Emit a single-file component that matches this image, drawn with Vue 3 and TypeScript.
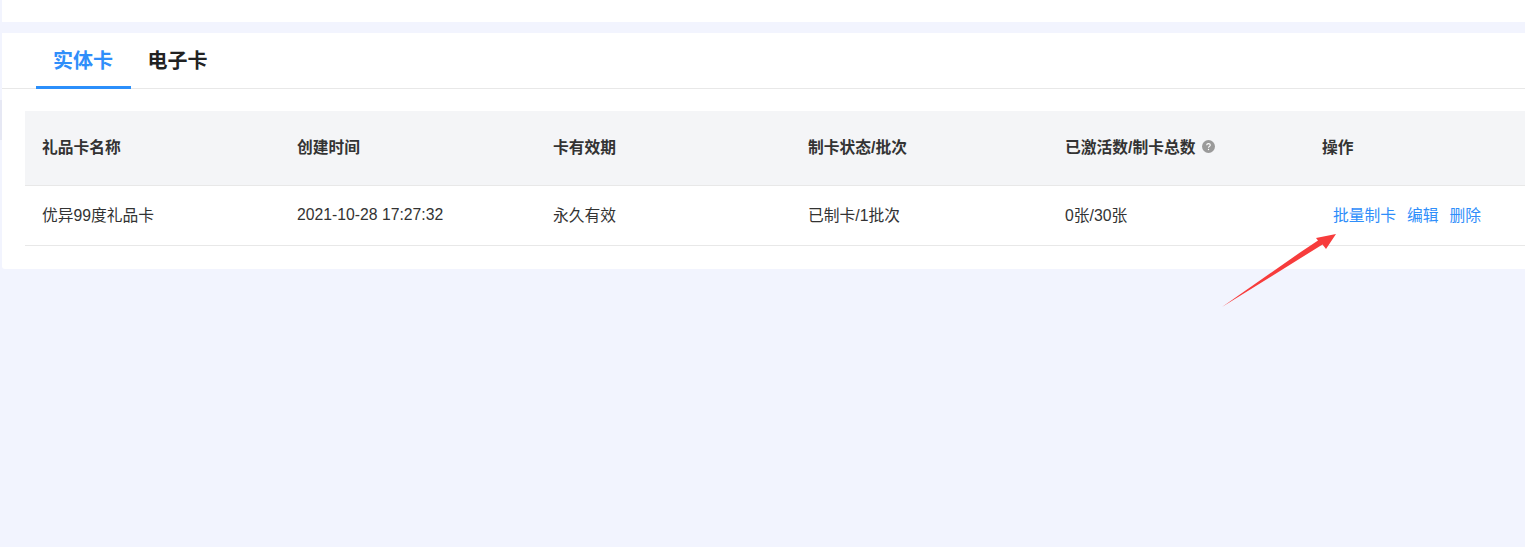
<script setup lang="ts">
const headers = ['礼品卡名称', '创建时间', '卡有效期', '制卡状态/批次', '已激活数/制卡总数', '操作']
const cells = ['优异99度礼品卡', '2021-10-28 17:27:32', '永久有效', '已制卡/1批次', '0张/30张']
</script>

<template>
  <div class="page">
    <div class="edge"></div>
    <div class="top-card"></div>
    <section class="card">
      <div class="tabs">
        <div class="tab active">实体卡</div>
        <div class="tab">电子卡</div>
      </div>
      <div class="table">
        <div class="row head">
          <div v-for="(h, i) in headers" :key="h" class="cell">
            {{ h }}
            <svg v-if="i === 4" class="help" width="13" height="13" viewBox="0 0 13 13">
              <circle cx="6.5" cy="6.5" r="6.5" fill="#9a9a9a" />
              <path d="M4.7 5.2c0-1 .8-1.6 1.8-1.6s1.8.6 1.8 1.5c0 1.3-1.8 1.3-1.8 2.6" fill="none" stroke="#fff" stroke-width="1.1" />
              <circle cx="6.5" cy="9.5" r=".7" fill="#fff" />
            </svg>
          </div>
        </div>
        <div class="row body">
          <div v-for="c in cells" :key="c" class="cell">{{ c }}</div>
          <div class="cell actions">
            <a>批量制卡</a>
            <a>编辑</a>
            <a>删除</a>
          </div>
        </div>
      </div>
    </section>
    <svg class="arrow" width="120" height="80" viewBox="0 0 120 80">
      <path d="M0 77 L78 22.5 L96 10.5 L94 8 L114 4 L104 19 L100.5 14.5 L78 28.5 Z" fill="#f73c3c" />
    </svg>
  </div>
</template>

<style>
html, body { margin: 0; background: #f2f4fe; }
</style>

<style scoped>
.page {
  position: relative;
  height: 547px;
  overflow: hidden;
  padding-left: 2px;
  box-sizing: border-box;
  font-family: "Liberation Sans", "Noto Sans CJK SC", sans-serif;
  color: #333;
}
.edge {
  position: absolute;
  left: 0;
  top: 100px;
  width: 2px;
  height: 40px;
  background: #e6e8f4;
}
.top-card {
  height: 22px;
  background: #fff;
  margin-bottom: 11px;
}
.card {
  height: 236px;
  background: #fff;
  border-radius: 0 0 0 3px;
}
.tabs {
  display: flex;
  height: 55px;
  padding-left: 34px;
  border-bottom: 1px solid #e8e8e8;
}
.tab {
  width: 95px;
  height: 56px;
  box-sizing: border-box;
  padding-left: 16.5px;
  font-size: 20px;
  font-weight: 700;
  line-height: 56px;
  color: #222;
}
.tab.active {
  padding-left: 17px;
  color: #2f8efa;
  border-bottom: 3px solid #2b8ffb;
}
.table {
  margin: 22px 0 0 23px;
  width: 1540px;
  font-size: 15.75px;
}
.row {
  display: grid;
  grid-template-columns: 255px 256px 255px 257px 257px 260px;
}
.head {
  height: 75px;
  background: #f4f5f7;
  border-bottom: 1px solid #e8e8e8;
  box-sizing: border-box;
  font-weight: 700;
  align-items: center;
  padding-bottom: 3px;
}
.body {
  height: 60px;
  border-bottom: 1px solid #e8e8e8;
  box-sizing: border-box;
  align-items: center;
  padding-bottom: 2px;
}
.cell {
  padding-left: 17px;
  display: flex;
  align-items: center;
}
.help { margin-left: 7px; }
.actions { gap: 11px; padding-left: 28px; }
.actions a { color: #2f8efa; }
.arrow {
  position: absolute;
  left: 1222px;
  top: 230px;
}
</style>
